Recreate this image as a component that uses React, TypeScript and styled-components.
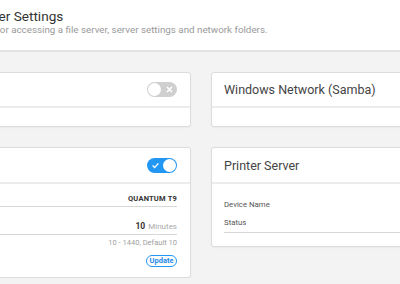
import React from 'react';
import styled, { createGlobalStyle } from 'styled-components';

const GlobalStyle = createGlobalStyle`
  html, body {
    margin: 0;
    padding: 0;
    background: #f3f3f3;
    overflow: hidden;
    font-family: Roboto, "Liberation Sans", Arial, sans-serif;
  }
`;

const Page = styled.div`
  width: 800px;
  margin-left: -180px;
`;

const Header = styled.header`
  height: 52px;
  box-sizing: border-box;
  background: #fff;
  border-bottom: 2px solid #e3e3e3;
  padding: 8px 0 0 152px;
`;

const Title = styled.h1`
  margin: 0;
  font-size: 13.6px;
  font-weight: 400;
  color: #333;
  line-height: 17px;
`;

const Subtitle = styled.p`
  margin: -1px 0 0 -2px;
  font-size: 9.8px;
  color: #9a9a9a;
  line-height: 11px;
`;

const Grid = styled.div`
  display: grid;
  grid-template-columns: 360px 360px;
  column-gap: 20px;
  row-gap: 20px;
  align-items: start;
  padding: 20px 0 0 11px;
`;

const Card = styled.section`
  background: #fff;
  border: 1px solid #dcdcdc;
  border-radius: 3px;
  box-shadow: 0 1px 2px rgba(0, 0, 0, 0.04);
`;

const CardHeader = styled.div<{ $h?: number }>`
  height: ${(p) => p.$h ?? 33}px;
  display: flex;
  align-items: center;
  justify-content: space-between;
  padding: 0 13px 0 12px;
  border-bottom: 2px solid #ececec;
`;

const CardTitle = styled.h2`
  margin: 0;
  font-size: 12.5px;
  font-weight: 400;
  color: #444;
`;

const CardBody = styled.div<{ $pad?: string }>`
  padding: ${(p) => p.$pad ?? '0'};
  min-height: 18px;
`;

const Track = styled.div<{ $on?: boolean }>`
  position: relative;
  width: 30px;
  height: 15px;
  border-radius: 8px;
  background: ${(p) => (p.$on ? '#2196f3' : '#cfcfcf')};
  flex-shrink: 0;
`;

const Knob = styled.span<{ $on?: boolean }>`
  position: absolute;
  top: 1px;
  left: ${(p) => (p.$on ? '16px' : '1px')};
  width: 13px;
  height: 13px;
  border-radius: 50%;
  background: #fff;
`;

const Mark = styled.svg<{ $on?: boolean }>`
  position: absolute;
  top: 4px;
  left: ${(p) => (p.$on ? '5px' : '19px')};
`;

const Toggle = ({ on }: { on?: boolean }) => (
  <Track $on={on}>
    <Knob $on={on} />
    <Mark $on={on} width="7" height="7" viewBox="0 0 7 7">
      {on ? (
        <path d="M0.6 3.6 L2.6 5.6 L6.4 1.4" stroke="#fff" strokeWidth="1.4" fill="none" />
      ) : (
        <path d="M1 1 L6 6 M6 1 L1 6" stroke="#fff" strokeWidth="1.6" fill="none" />
      )}
    </Mark>
  </Track>
);

const Row = styled.div<{ $top?: number }>`
  display: flex;
  justify-content: space-between;
  align-items: flex-end;
  padding-top: ${(p) => p.$top ?? 0}px;
  padding-bottom: 2px;
  border-bottom: 1px solid #d8d8d8;
  font-size: 7.5px;
  line-height: 11px;
  color: #555;
`;

const Label = styled.span`
  color: #555;
`;

const Strong = styled.span`
  font-weight: 700;
  color: #333;
  letter-spacing: 0.2px;
`;

const Value = styled.span`
  font-size: 8px;
  color: #aaa;
  b {
    color: #333;
    font-weight: 700;
    font-size: 8.5px;
    margin-right: 3px;
  }
`;

const Hint = styled.div`
  text-align: right;
  font-size: 7.5px;
  line-height: 10px;
  color: #a0a0a0;
  margin-top: 3px;
`;

const Actions = styled.div`
  display: flex;
  justify-content: flex-end;
  margin-top: 7px;
`;

const OutlineButton = styled.button`
  height: 12px;
  width: 31px;
  padding: 0;
  border: 1.5px solid #2196f3;
  border-radius: 7px;
  background: #fff;
  color: #1e88e5;
  font-family: inherit;
  font-size: 7.5px;
  font-weight: 700;
  line-height: 8px;
`;

const InfoList = styled.div`
  display: flex;
  flex-direction: column;
  gap: 9px;
  padding-bottom: 5px;
  border-bottom: 1px solid #d8d8d8;
  font-size: 7.8px;
  color: #555;
`;

export default function App() {
  return (
    <>
      <GlobalStyle />
      <Page>
        <Header>
          <Title>Server Settings</Title>
          <Subtitle>Tools for accessing a file server, server settings and network folders.</Subtitle>
        </Header>
        <Grid>
          <Card>
            <CardHeader>
              <CardTitle>FTP Server</CardTitle>
              <Toggle />
            </CardHeader>
            <CardBody />
          </Card>
          <Card>
            <CardHeader>
              <CardTitle>Windows Network (Samba)</CardTitle>
            </CardHeader>
            <CardBody />
          </Card>
          <Card>
            <CardHeader $h={34}>
              <CardTitle>Media Server</CardTitle>
              <Toggle on />
            </CardHeader>
            <CardBody $pad="9px 13px 10px 12px">
              <Row>
                <Label>Server Name</Label>
                <Strong>QUANTUM T9</Strong>
              </Row>
              <Row $top={14}>
                <Label>Disk Standby Time</Label>
                <Value>
                  <b>10</b>Minutes
                </Value>
              </Row>
              <Hint>10 - 1440, Default 10</Hint>
              <Actions>
                <OutlineButton>Update</OutlineButton>
              </Actions>
            </CardBody>
          </Card>
          <Card>
            <CardHeader $h={34}>
              <CardTitle>Printer Server</CardTitle>
            </CardHeader>
            <CardBody $pad="16px 12px 13px 12px">
              <InfoList>
                <span>Device Name</span>
                <span>Status</span>
              </InfoList>
            </CardBody>
          </Card>
        </Grid>
      </Page>
    </>
  );
}
